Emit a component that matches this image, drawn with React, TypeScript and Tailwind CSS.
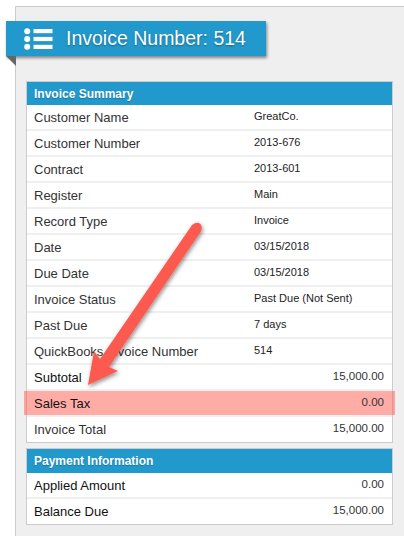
const F = "font-['Liberation_Sans',Arial,sans-serif]";

function Row({ label, value, amount, dark, highlight }: { label: string; value?: string; amount?: string; dark?: boolean; highlight?: boolean }) {
  return (
    <div className="relative flex h-[26px] items-center border-b-2 border-[#efefef] last:h-[25px] last:border-b-0 last:pb-[1px] pl-[7px] pr-[8px]">
      {highlight && <div className="absolute left-[-3px] right-[-3px] top-0 h-[24px] bg-[#ff5a50]/50" />}
      <span className={`relative w-[220px] shrink-0 text-[13px] leading-none ${dark ? "text-[#111]" : "text-[#333]"}`}>{label}</span>
      {value && <span className="relative mt-[-2px] text-[11px] leading-none text-[#222]">{value}</span>}
      {amount && <span className="relative ml-auto mt-[-1px] text-[11.5px] leading-none text-[#333]">{amount}</span>}
    </div>
  );
}

function Card({ title, tall, children }: { title: string; tall?: boolean; children: React.ReactNode }) {
  return (
    <section className="border border-[#cccccc] bg-white">
      <h2 className={`flex items-center bg-[#2299cc] pl-[7px] text-[12px] font-bold text-white [text-shadow:0_1px_1px_rgba(0,0,0,0.25)] ${tall ? "h-[24px]" : "h-[23px]"}`}>{title}</h2>
      {children}
    </section>
  );
}

export default function App() {
  return (
    <div className={`${F} relative h-[536px] w-[404px] overflow-hidden bg-white`}>
      <div className="ml-[15px] h-[536px] translate-y-[6px] border-l border-t border-[#cccccc] bg-[#efefef] pt-[14px]">
        <div className="relative ml-[-10px] flex h-[35px] w-[260px] items-center bg-[#2299cc] pl-[18px] shadow-[1px_2px_3px_rgba(0,0,0,0.45)]">
          <svg width="29" height="22" viewBox="0 0 29 22" fill="white" className="shrink-0">
            <circle cx="3.2" cy="3.2" r="3" />
            <circle cx="3.2" cy="11" r="3" />
            <circle cx="3.2" cy="18.8" r="3" />
            <rect x="9.5" y="1" width="19" height="4.2" />
            <rect x="9.5" y="8.9" width="19" height="4.2" />
            <rect x="9.5" y="16.8" width="19" height="4.2" />
          </svg>
          <span className="ml-[13px] text-[19.5px] leading-none text-white [text-shadow:0_1px_2px_rgba(0,0,0,0.35)]">Invoice Number: 514</span>
          <div className="absolute left-0 top-full h-0 w-0 border-l-[10px] border-b-[10px] border-t-0 border-l-transparent border-b-transparent border-r-0 [border-top:10px_solid_#666]" />
        </div>
        <div className="ml-[10px] mr-[11px] mt-[25px] flex flex-col gap-[5px]">
          <Card title="Invoice Summary">
            <Row label="Customer Name" value="GreatCo." />
            <Row label="Customer Number" value="2013-676" />
            <Row label="Contract" value="2013-601" />
            <Row label="Register" value="Main" />
            <Row label="Record Type" value="Invoice" />
            <Row label="Date" value="03/15/2018" />
            <Row label="Due Date" value="03/15/2018" />
            <Row label="Invoice Status" value="Past Due (Not Sent)" />
            <Row label="Past Due" value="7 days" />
            <Row label="QuickBooks Invoice Number" value="514" />
            <Row label="Subtotal" amount="15,000.00" dark />
            <Row label="Sales Tax" amount="0.00" dark highlight />
            <Row label="Invoice Total" amount="15,000.00" />
          </Card>
          <Card title="Payment Information" tall>
            <Row label="Applied Amount" amount="0.00" dark />
            <Row label="Balance Due" amount="15,000.00" dark />
          </Card>
        </div>
      </div>
      <svg className="absolute left-0 top-0 pointer-events-none" width="404" height="536" viewBox="0 0 404 536">
        <defs>
          <filter id="s" x="-30%" y="-30%" width="160%" height="160%">
            <feDropShadow dx="1" dy="2" stdDeviation="2" floodColor="#000" floodOpacity="0.45" />
          </filter>
        </defs>
        <path d="M192 225 Q197 221 200.5 224 Q203 228 200.5 232 L109 367 L118 371 L88 385 L94 351 L100 359 Z" fill="#fd5a4f" filter="url(#s)" />
      </svg>
    </div>
  );
}
